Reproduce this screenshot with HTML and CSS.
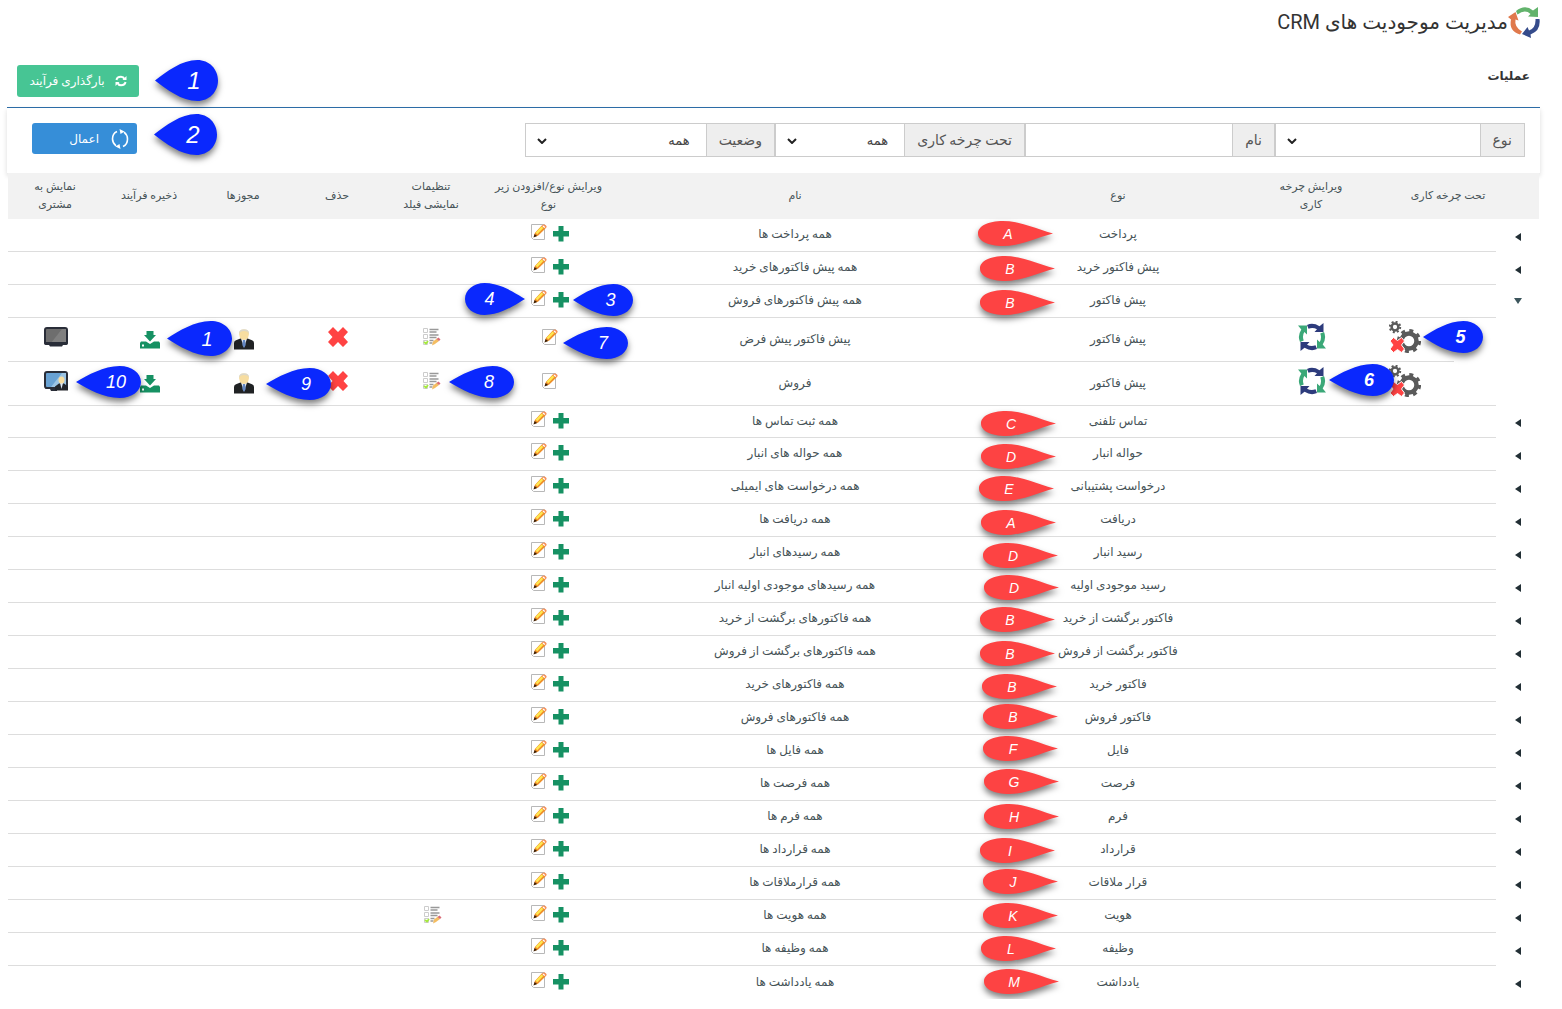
FILE: index.html
```html
<!DOCTYPE html>
<html lang="fa" dir="rtl">
<head>
<meta charset="utf-8">
<title>مدیریت موجودیت های CRM</title>
<link rel="stylesheet" href="styles.css">
</head>
<body>
<svg class="defs" width="0" height="0" aria-hidden="true">
  <symbol id="plus" viewBox="0 0 16 16"><path d="M5.500 0h5v5H16v5.500h-5.500V15.500h-5v-5H0V5h5.500z" fill="#169163"/></symbol>
  <symbol id="edit" viewBox="0 0 16 18">
    <path d="M.5 1.500h13v15h-11l-2-2z" fill="#fff" stroke="#b8b8b8"/>
    <path d="M2.800 14l1-4 7-7.500 3.700 3-7.500 7.300z" fill="#ef8f2a"/><path d="M4.500 9.800l6-6.300 1.800 1.500-6 6.300z" fill="#ffe84f"/>
    <path d="M10.800 2.700l1-1q1.700-.7 3 .6t.6 2.200l-1 1z" fill="#f5905a"/><path d="M12 3l1.800 1.500" stroke="#fff" stroke-width="1.200"/>
    <path d="M3.600 11l2.600 2-3.700 1.500z" fill="#3c2008"/>
  </symbol>
  <symbol id="left" viewBox="0 0 8 10"><path d="M7 1v8L1 5z" fill="#222f35"/></symbol>
  <symbol id="down" viewBox="0 0 8 10"><path d="M0 0h8L4 6z" fill="#3c555c"/></symbol>
  <symbol id="cross" viewBox="0 0 20 20"><path d="M5 0l5 5 5-5 5 5-4.500 5 4.500 5-5 5-5-5-5 5-5-5 4.500-5L0 5z" fill="#ff4343"/></symbol>
  <symbol id="save" viewBox="0 0 20 18"><path d="M6.500 0h7v4H16l-6 6.500L4 4h2.500z" fill="#169163"/><path d="M1 10.500h5l4 2.500 4-2.500h5l1 1.500v5.500H0V12z" fill="#169163"/><path d="M2 13.500h2v2H2z" fill="#fff"/></symbol>
  <symbol id="person" viewBox="0 0 20 21">
    <path d="M0 20.500V14q0-2 2-2.700l5-2h6l5 2q2 .7 2 2.700v6.500z" fill="#202224"/><path d="M7 9.500h6l-3 9z" fill="#e6ecf5"/><path d="M9 11h2l.7 5-1.700 3-1.700-3z" fill="#6488c4"/>
    <path d="M5 5Q5 .5 10 .5T15 5l-1 4q-4 4-8 0z" fill="#f7dda0"/><path d="M5 5Q4.500.3 10 .3T15 5q-1-3-5-3T5 5z" fill="#ddd8c8"/>
  </symbol>
  <symbol id="list" viewBox="0 0 18 18">
    <g fill="#fff" stroke="#ccc"><path d="M.5.500h4v4h-4zM.5 6.500h4v4h-4zM.5 12.500h4v4h-4z"/></g>
    <path d="M6.500 1.500h9M6.500 4h7M6.500 7h9M6.500 9.500h7M6.500 12.500h4M6.500 15h3" stroke="#999" stroke-width="1.300"/>
    <path d="M1 14l2 1.500 2-2.500" fill="none" stroke="#a5ea3c" stroke-width="1.800"/><path d="M9 17.500l1-4 4-3 2 2.500-4 3z" fill="#f4bd62"/><path d="M13.500 11l2-1.500 2 2-1.500 1.500z" fill="#d96b77"/>
  </symbol>
  <symbol id="screen-off" viewBox="0 0 24 20"><rect x="1" y="1" width="22" height="16" rx="2" fill="#6e6e6e" stroke="#292d38" stroke-width="2"/><path d="M7 16L18 2h4v14z" fill="#808080"/><path d="M0 15h24v1q0 2-2 2h-3l-1 1.500H6L5 18H2q-2 0-2-2z" fill="#292d38"/></symbol>
  <symbol id="screen-on" viewBox="0 0 24 20"><rect x="1" y="1" width="22" height="16" rx="2" fill="#69a2d3" stroke="#292d38" stroke-width="2"/><path d="M7 16L18 2h4v14z" fill="#9bc4e4"/><path d="M1 16h12v4H7l-1-2H3q-2 0-2-1z" fill="#292d38"/><path d="M11 19.500v-4l4-3h5l4 3v4z" fill="#22252b"/><path d="M16 12h3l-1.500 6z" fill="#dce8f6"/><ellipse cx="17.500" cy="9" rx="3" ry="3.500" fill="#f7dda0"/></symbol>
  <symbol id="cycle" viewBox="0 0 28 28">
    <g fill="#2d3b7c"><path d="M9 2Q15-.8 21.500 3.300L25.500 0V9H16.500L19 6.300Q15 4 10.500 5.700z"/><path d="M9 2Q15-.8 21.500 3.300L25.500 0V9H16.500L19 6.300Q15 4 10.500 5.700z" transform="rotate(180 14 14)"/></g>
    <g fill="#3ba878"><path d="M9 2Q15-.8 21.500 3.300L25.500 0V9H16.500L19 6.300Q15 4 10.500 5.700z" transform="rotate(90 14 14)"/><path d="M9 2Q15-.8 21.500 3.300L25.500 0V9H16.500L19 6.300Q15 4 10.500 5.700z" transform="rotate(270 14 14)"/></g>
  </symbol>
  <symbol id="gears" viewBox="0 0 32 32">
    <g fill="none" stroke="#5a5a5a"><circle cx="6" cy="6" r="3.400" stroke-width="2.500"/><circle cx="6" cy="6" r="5.200" stroke-width="2" stroke-dasharray="2 2.080"/>
    <circle cx="20" cy="20" r="7.500" stroke-width="4.500"/><circle cx="20" cy="20" r="10.600" stroke-width="3" stroke-dasharray="4 4.320"/></g>
    <path d="M4.500 16.500l4 3 4-3 3 3.500-3 4 3 4-3 3.500-4-3-4 3-3.500-3.500 3-4-3-4z" fill="#ff4343" stroke="#fff" stroke-width="1"/>
  </symbol>
  <symbol id="blue" viewBox="0 0 64 32" preserveAspectRatio="none"><path d="M0 16C12 9 27 0 43 0 55 0 64 7 64 16S55 32 43 32C27 32 12 23 0 16z" fill="#0a28fd"/></symbol>
  <symbol id="red" viewBox="0 0 75 25" preserveAspectRatio="none"><path d="M75 12.500C58 8 42 0 25 0 10 0 0 5 0 12.500S10 25 25 25C42 25 58 17 75 12.500z" fill="#fd4343"/></symbol>
</svg>

<header class="title">
  <svg width="32" height="32" viewBox="0 0 32 32" aria-hidden="true">
    <path d="M8 5Q17-2 25 4.500L30 1V11L20 10.500 22.500 8Q17 3 9.500 8.500z" fill="#62b36c"/>
    <path d="M27.500 13H31.500Q33 25 22.500 28.500L23 32 14 28 19.500 21 21 24.500Q28 22 27.500 13z" fill="#354b8b"/>
    <path d="M14 25.500L12 28.500Q.5 25 3 13.500L0 11 7.500 6 10.500 14.500 7.500 13.500Q6 21 14 25.500z" fill="#e0794c"/>
  </svg>
  <h1>مدیریت موجودیت های CRM</h1>
</header>

<section class="actions">
  <h2>عملیات</h2>
  <button class="btn load" type="button">
    <svg width="12" height="12" viewBox="0 0 12 12" aria-hidden="true" fill="none" stroke="#fff" stroke-width="2"><path d="M1.500 5Q2 1.800 6 1.800 8.500 1.800 9.500 4M10.500 7Q10 10.200 6 10.200 3.500 10.200 2.500 8"/><path d="M11.500 1v4H7.500zM.5 11V7h4z" fill="#fff" stroke="none"/></svg>
    بارگذاری فرآیند
  </button>
</section>

<form class="filters">
  <div class="group"><label for="f-type">نوع</label><select id="f-type"><option></option></select></div>
  <div class="group"><label for="f-name">نام</label><input id="f-name" type="text"></div>
  <div class="group"><label for="f-flow">تحت چرخه کاری</label><select id="f-flow"><option>همه</option></select></div>
  <div class="group"><label for="f-status">وضعیت</label><select id="f-status"><option>همه</option></select></div>
  <button class="btn apply" type="button">
    <svg width="18" height="20" viewBox="0 0 18 20" aria-hidden="true" fill="none" stroke="#fff" stroke-width="1.600"><path d="M6 2.500Q1.500 4.500 1.500 10 1.500 14 5 16.800M12 17.500Q16.500 15.500 16.500 10 16.500 6 13 3.200"/><path d="M8.500 0l5 2.500-4 2.500zM9.500 20l-5-2.500 4-2.500z" fill="#fff" stroke="none"/></svg>
    <span>اعمال</span>
  </button>
</form>

<table class="entities">
  <colgroup><col class="c-toggle"><col class="c-indent"><col class="c-flow"><col class="c-cycle"><col class="c-type"><col class="c-name"><col class="c-edit"><col class="c-s"><col class="c-s"><col class="c-s"><col class="c-s"><col class="c-s"></colgroup>
  <thead><tr><th colspan="3">تحت چرخه کاری</th><th>ویرایش چرخه<br>کاری</th><th>نوع</th><th>نام</th><th>ویرایش نوع/افزودن زیر<br>نوع</th><th>تنظیمات<br>نمایشی فیلد</th><th>حذف</th><th>مجوزها</th><th>ذخیره فرآیند</th><th>نمایش به<br>مشتری</th></tr></thead>
  <tbody>
  <tr><td class="tog"><button aria-label="باز کردن"><svg><use href="#left"/></svg></button></td><td colspan="3"></td><td>پرداخت</td><td>همه پرداخت ها</td><td class="ed"><button aria-label="افزودن"><svg class="i16"><use href="#plus"/></svg></button><button aria-label="ویرایش"><svg class="ie"><use href="#edit"/></svg></button></td><td colspan="5"></td></tr>
  <tr><td class="tog"><button aria-label="باز کردن"><svg><use href="#left"/></svg></button></td><td colspan="3"></td><td>پیش فاکتور خرید</td><td>همه پیش فاکتورهای خرید</td><td class="ed"><button aria-label="افزودن"><svg class="i16"><use href="#plus"/></svg></button><button aria-label="ویرایش"><svg class="ie"><use href="#edit"/></svg></button></td><td colspan="5"></td></tr>
  <tr><td class="tog"><button aria-label="بستن"><svg><use href="#down"/></svg></button></td><td colspan="3"></td><td>پیش فاکتور</td><td>همه پیش فاکتورهای فروش</td><td class="ed"><button aria-label="افزودن"><svg class="i16"><use href="#plus"/></svg></button><button aria-label="ویرایش"><svg class="ie"><use href="#edit"/></svg></button></td><td colspan="5"></td></tr>
  <tr class="child"><td class="bare" colspan="2"></td><td class="ic flow"><button aria-label="تحت چرخه کاری"><svg class="i32"><use href="#gears"/></svg></button></td><td class="ic"><button aria-label="ویرایش چرخه کاری"><svg class="i28"><use href="#cycle"/></svg></button></td><td>پیش فاکتور</td><td>پیش فاکتور پیش فرض</td><td class="ic"><button aria-label="ویرایش"><svg class="ie"><use href="#edit"/></svg></button></td><td class="ic"><button aria-label="تنظیمات"><svg class="i18"><use href="#list"/></svg></button></td><td class="ic"><button aria-label="حذف"><svg class="i20"><use href="#cross"/></svg></button></td><td class="ic low"><button aria-label="مجوزها"><svg class="ip"><use href="#person"/></svg></button></td><td class="ic low"><button aria-label="ذخیره فرآیند"><svg class="isv"><use href="#save"/></svg></button></td><td class="ic"><button aria-label="نمایش به مشتری"><svg class="im"><use href="#screen-off"/></svg></button></td></tr>
  <tr class="child"><td class="bare"></td><td></td><td class="ic flow"><button aria-label="تحت چرخه کاری"><svg class="i32"><use href="#gears"/></svg></button></td><td class="ic"><button aria-label="ویرایش چرخه کاری"><svg class="i28"><use href="#cycle"/></svg></button></td><td>پیش فاکتور</td><td>فروش</td><td class="ic"><button aria-label="ویرایش"><svg class="ie"><use href="#edit"/></svg></button></td><td class="ic"><button aria-label="تنظیمات"><svg class="i18"><use href="#list"/></svg></button></td><td class="ic"><button aria-label="حذف"><svg class="i20"><use href="#cross"/></svg></button></td><td class="ic low"><button aria-label="مجوزها"><svg class="ip"><use href="#person"/></svg></button></td><td class="ic low"><button aria-label="ذخیره فرآیند"><svg class="isv"><use href="#save"/></svg></button></td><td class="ic"><button aria-label="نمایش به مشتری"><svg class="im"><use href="#screen-on"/></svg></button></td></tr>
  <tr class="next"><td class="tog"><button aria-label="باز کردن"><svg><use href="#left"/></svg></button></td><td colspan="3"></td><td>تماس تلفنی</td><td>همه ثبت تماس ها</td><td class="ed"><button aria-label="افزودن"><svg class="i16"><use href="#plus"/></svg></button><button aria-label="ویرایش"><svg class="ie"><use href="#edit"/></svg></button></td><td colspan="5"></td></tr>
  <tr><td class="tog"><button aria-label="باز کردن"><svg><use href="#left"/></svg></button></td><td colspan="3"></td><td>حواله انبار</td><td>همه حواله های انبار</td><td class="ed"><button aria-label="افزودن"><svg class="i16"><use href="#plus"/></svg></button><button aria-label="ویرایش"><svg class="ie"><use href="#edit"/></svg></button></td><td colspan="5"></td></tr>
  <tr><td class="tog"><button aria-label="باز کردن"><svg><use href="#left"/></svg></button></td><td colspan="3"></td><td>درخواست پشتیبانی</td><td>همه درخواست های ایمیلی</td><td class="ed"><button aria-label="افزودن"><svg class="i16"><use href="#plus"/></svg></button><button aria-label="ویرایش"><svg class="ie"><use href="#edit"/></svg></button></td><td colspan="5"></td></tr>
  <tr><td class="tog"><button aria-label="باز کردن"><svg><use href="#left"/></svg></button></td><td colspan="3"></td><td>دریافت</td><td>همه دریافت ها</td><td class="ed"><button aria-label="افزودن"><svg class="i16"><use href="#plus"/></svg></button><button aria-label="ویرایش"><svg class="ie"><use href="#edit"/></svg></button></td><td colspan="5"></td></tr>
  <tr><td class="tog"><button aria-label="باز کردن"><svg><use href="#left"/></svg></button></td><td colspan="3"></td><td>رسید انبار</td><td>همه رسیدهای انبار</td><td class="ed"><button aria-label="افزودن"><svg class="i16"><use href="#plus"/></svg></button><button aria-label="ویرایش"><svg class="ie"><use href="#edit"/></svg></button></td><td colspan="5"></td></tr>
  <tr><td class="tog"><button aria-label="باز کردن"><svg><use href="#left"/></svg></button></td><td colspan="3"></td><td>رسید موجودی اولیه</td><td>همه رسیدهای موجودی اولیه انبار</td><td class="ed"><button aria-label="افزودن"><svg class="i16"><use href="#plus"/></svg></button><button aria-label="ویرایش"><svg class="ie"><use href="#edit"/></svg></button></td><td colspan="5"></td></tr>
  <tr><td class="tog"><button aria-label="باز کردن"><svg><use href="#left"/></svg></button></td><td colspan="3"></td><td>فاکتور برگشت از خرید</td><td>همه فاکتورهای برگشت از خرید</td><td class="ed"><button aria-label="افزودن"><svg class="i16"><use href="#plus"/></svg></button><button aria-label="ویرایش"><svg class="ie"><use href="#edit"/></svg></button></td><td colspan="5"></td></tr>
  <tr><td class="tog"><button aria-label="باز کردن"><svg><use href="#left"/></svg></button></td><td colspan="3"></td><td>فاکتور برگشت از فروش</td><td>همه فاکتورهای برگشت از فروش</td><td class="ed"><button aria-label="افزودن"><svg class="i16"><use href="#plus"/></svg></button><button aria-label="ویرایش"><svg class="ie"><use href="#edit"/></svg></button></td><td colspan="5"></td></tr>
  <tr><td class="tog"><button aria-label="باز کردن"><svg><use href="#left"/></svg></button></td><td colspan="3"></td><td>فاکتور خرید</td><td>همه فاکتورهای خرید</td><td class="ed"><button aria-label="افزودن"><svg class="i16"><use href="#plus"/></svg></button><button aria-label="ویرایش"><svg class="ie"><use href="#edit"/></svg></button></td><td colspan="5"></td></tr>
  <tr><td class="tog"><button aria-label="باز کردن"><svg><use href="#left"/></svg></button></td><td colspan="3"></td><td>فاکتور فروش</td><td>همه فاکتورهای فروش</td><td class="ed"><button aria-label="افزودن"><svg class="i16"><use href="#plus"/></svg></button><button aria-label="ویرایش"><svg class="ie"><use href="#edit"/></svg></button></td><td colspan="5"></td></tr>
  <tr><td class="tog"><button aria-label="باز کردن"><svg><use href="#left"/></svg></button></td><td colspan="3"></td><td>فایل</td><td>همه فایل ها</td><td class="ed"><button aria-label="افزودن"><svg class="i16"><use href="#plus"/></svg></button><button aria-label="ویرایش"><svg class="ie"><use href="#edit"/></svg></button></td><td colspan="5"></td></tr>
  <tr><td class="tog"><button aria-label="باز کردن"><svg><use href="#left"/></svg></button></td><td colspan="3"></td><td>فرصت</td><td>همه فرصت ها</td><td class="ed"><button aria-label="افزودن"><svg class="i16"><use href="#plus"/></svg></button><button aria-label="ویرایش"><svg class="ie"><use href="#edit"/></svg></button></td><td colspan="5"></td></tr>
  <tr><td class="tog"><button aria-label="باز کردن"><svg><use href="#left"/></svg></button></td><td colspan="3"></td><td>فرم</td><td>همه فرم ها</td><td class="ed"><button aria-label="افزودن"><svg class="i16"><use href="#plus"/></svg></button><button aria-label="ویرایش"><svg class="ie"><use href="#edit"/></svg></button></td><td colspan="5"></td></tr>
  <tr><td class="tog"><button aria-label="باز کردن"><svg><use href="#left"/></svg></button></td><td colspan="3"></td><td>قرارداد</td><td>همه قرارداد ها</td><td class="ed"><button aria-label="افزودن"><svg class="i16"><use href="#plus"/></svg></button><button aria-label="ویرایش"><svg class="ie"><use href="#edit"/></svg></button></td><td colspan="5"></td></tr>
  <tr><td class="tog"><button aria-label="باز کردن"><svg><use href="#left"/></svg></button></td><td colspan="3"></td><td>قرار ملاقات</td><td>همه قرارملاقات ها</td><td class="ed"><button aria-label="افزودن"><svg class="i16"><use href="#plus"/></svg></button><button aria-label="ویرایش"><svg class="ie"><use href="#edit"/></svg></button></td><td colspan="5"></td></tr>
  <tr><td class="tog"><button aria-label="باز کردن"><svg><use href="#left"/></svg></button></td><td colspan="3"></td><td>هویت</td><td>همه هویت ها</td><td class="ed"><button aria-label="افزودن"><svg class="i16"><use href="#plus"/></svg></button><button aria-label="ویرایش"><svg class="ie"><use href="#edit"/></svg></button></td><td class="ic"><button aria-label="تنظیمات"><svg class="i18"><use href="#list"/></svg></button></td><td colspan="4"></td></tr>
  <tr><td class="tog"><button aria-label="باز کردن"><svg><use href="#left"/></svg></button></td><td colspan="3"></td><td>وظیفه</td><td>همه وظیفه ها</td><td class="ed"><button aria-label="افزودن"><svg class="i16"><use href="#plus"/></svg></button><button aria-label="ویرایش"><svg class="ie"><use href="#edit"/></svg></button></td><td colspan="5"></td></tr>
  <tr class="last"><td class="tog"><button aria-label="باز کردن"><svg><use href="#left"/></svg></button></td><td colspan="3"></td><td>یادداشت</td><td>همه یادداشت ها</td><td class="ed"><button aria-label="افزودن"><svg class="i16"><use href="#plus"/></svg></button><button aria-label="ویرایش"><svg class="ie"><use href="#edit"/></svg></button></td><td colspan="5"></td></tr>
  </tbody>
</table>

<div class="callouts">
  <div class="pin blue big" style="left:155px;top:60px"><svg><use href="#blue"/></svg><i>1</i></div>
  <div class="pin blue big" style="left:154px;top:114px"><svg><use href="#blue"/></svg><i>2</i></div>
  <div class="pin blue short" style="left:573px;top:284px"><svg><use href="#blue"/></svg><i>3</i></div>
  <div class="pin blue short flip" style="left:465px;top:283px"><svg><use href="#blue"/></svg><i>4</i></div>
  <div class="pin blue short bold" style="left:1423px;top:321px"><svg><use href="#blue"/></svg><i>5</i></div>
  <div class="pin blue bold" style="left:1329px;top:364px"><svg><use href="#blue"/></svg><i>6</i></div>
  <div class="pin blue" style="left:563px;top:327px"><svg><use href="#blue"/></svg><i>7</i></div>
  <div class="pin blue" style="left:449px;top:366px"><svg><use href="#blue"/></svg><i>8</i></div>
  <div class="pin blue" style="left:266px;top:368px"><svg><use href="#blue"/></svg><i>9</i></div>
  <div class="pin blue" style="left:76px;top:366px"><svg><use href="#blue"/></svg><i>10</i></div>
  <div class="pin blue tall" style="left:167px;top:321px"><svg><use href="#blue"/></svg><i>1</i></div>
  <div class="pin red" style="left:978px;top:221px"><svg><use href="#red"/></svg><i>A</i></div>
  <div class="pin red" style="left:980px;top:256px"><svg><use href="#red"/></svg><i>B</i></div>
  <div class="pin red" style="left:980px;top:290px"><svg><use href="#red"/></svg><i>B</i></div>
  <div class="pin red" style="left:981px;top:411px"><svg><use href="#red"/></svg><i>C</i></div>
  <div class="pin red" style="left:981px;top:444px"><svg><use href="#red"/></svg><i>D</i></div>
  <div class="pin red" style="left:979px;top:476px"><svg><use href="#red"/></svg><i>E</i></div>
  <div class="pin red" style="left:981px;top:510px"><svg><use href="#red"/></svg><i>A</i></div>
  <div class="pin red" style="left:983px;top:543px"><svg><use href="#red"/></svg><i>D</i></div>
  <div class="pin red" style="left:984px;top:575px"><svg><use href="#red"/></svg><i>D</i></div>
  <div class="pin red" style="left:980px;top:607px"><svg><use href="#red"/></svg><i>B</i></div>
  <div class="pin red" style="left:980px;top:641px"><svg><use href="#red"/></svg><i>B</i></div>
  <div class="pin red" style="left:982px;top:674px"><svg><use href="#red"/></svg><i>B</i></div>
  <div class="pin red" style="left:983px;top:704px"><svg><use href="#red"/></svg><i>B</i></div>
  <div class="pin red" style="left:983px;top:736px"><svg><use href="#red"/></svg><i>F</i></div>
  <div class="pin red" style="left:984px;top:769px"><svg><use href="#red"/></svg><i>G</i></div>
  <div class="pin red" style="left:984px;top:804px"><svg><use href="#red"/></svg><i>H</i></div>
  <div class="pin red" style="left:980px;top:838px"><svg><use href="#red"/></svg><i>I</i></div>
  <div class="pin red" style="left:983px;top:869px"><svg><use href="#red"/></svg><i>J</i></div>
  <div class="pin red" style="left:983px;top:903px"><svg><use href="#red"/></svg><i>K</i></div>
  <div class="pin red" style="left:981px;top:936px"><svg><use href="#red"/></svg><i>L</i></div>
  <div class="pin red" style="left:984px;top:969px"><svg><use href="#red"/></svg><i>M</i></div>
</div>
</body>
</html>
```
FILE: styles.css
```css
* { box-sizing: border-box; }
body { margin: 0; background: #fff; color: #465357; font: 12px/18px Roboto, "DejaVu Sans", sans-serif; position: relative; overflow-x: hidden; }
.defs { position: absolute; }
button { font: inherit; }

.title { display: flex; align-items: center; height: 44px; padding: 0 22px 0 0; }
.title h1 { margin: 0; font-size: 20px; line-height: 32px; font-weight: 400; color: #333; }

.actions { display: flex; justify-content: space-between; align-items: center; height: 63px; margin: 0 22px 0 7px; padding: 11px 10px 0; }
.actions h2 { margin: 0; padding-bottom: 10px; font-size: 12px; font-weight: 700; color: #333; }

.btn { display: flex; align-items: center; border: 0; border-radius: 3px; color: #fff; font-size: 12px; font-weight: 500; }
.load { height: 32px; width: 122px; justify-content: center; gap: 10px; padding: 0; white-space: nowrap; background: #47c594; }
.apply { width: 105px; height: 31px; padding: 0 8px; gap: 12px; margin-right: auto; background: #368ed8; }

.filters { display: flex; height: 66px; margin: 0 22px 0 7px; padding: 15px 15px 0 25px; border-top: 1px solid #2c6ca6; box-shadow: 0 3px 5px rgba(0, 0, 0, .14); }
.group { display: flex; width: 250px; height: 34px; }
.group label { flex: none; padding: 0 12px; border: 1px solid #ccc; background: #eee; color: #555; font-size: 14px; line-height: 32px; text-align: center; }
.group select, .group input { flex: 1; min-width: 0; height: 34px; padding: 0 16px; border: 1px solid #ccc; border-radius: 0; border-right: 0; background: #fff; color: #444; font: 13px Roboto, "DejaVu Sans", sans-serif; }
.group select { appearance: none; background: #fff url("data:image/svg+xml,%3Csvg xmlns='http://www.w3.org/2000/svg' width='10' height='6'%3E%3Cpath d='M1 1l4 4 4-4' fill='none' stroke='%23222' stroke-width='2'/%3E%3C/svg%3E") no-repeat 11px 14px; }

.entities { position: relative; width: calc(100% - 31px); margin: 0 23px 0 8px; border-collapse: separate; border-spacing: 0; table-layout: fixed; background: #fff; }
.c-toggle { width: 43px; }
.c-indent { width: 42px; }
.c-flow { width: 97px; }
.c-cycle { width: 92px; }
.c-type { width: 294px; }
.c-edit { width: 141px; }
.c-s { width: 94px; }
th { height: 46px; padding: 0; background: #f2f2f2; font-size: 11px; font-weight: 400; white-space: nowrap; }
td { height: 33px; padding: 0 0 2px; border-bottom: 1px solid #ddd; text-align: center; }
.next td { height: 32px; }
.child td { height: 44px; padding: 0 0 2px; }
.child .ic { padding: 0 0 6px 2px; }
.child .low { padding-bottom: 0; }
.child .flow { padding-left: 0; }
td.tog, td.bare, .last td { border-bottom: 0; }
td button { padding: 0; border: 0; background: none; display: inline-block; vertical-align: middle; line-height: 0; }
.tog { padding: 2px 0 0; line-height: 0; }
.tog svg { width: 8px; height: 10px; }
.ed, .ic { padding-left: 3px; line-height: 0; }
.ed button + button { margin-right: 6px; padding-bottom: 4px; }
.i16 { width: 16px; height: 16px; }
.ie { width: 16px; height: 18px; }
.i18 { width: 18px; height: 18px; }
.i20 { width: 20px; height: 20px; }
.i28 { width: 28px; height: 28px; }
.i32 { width: 32px; height: 32px; }
.ip { width: 20px; height: 21px; }
.isv { width: 20px; height: 18px; }
.im { width: 24px; height: 20px; }

.callouts { position: absolute; top: 0; left: 0; direction: ltr; }
.pin { position: absolute; display: flex; align-items: center; justify-content: center; color: #fff; }
.pin svg { position: absolute; inset: 0; width: 100%; height: 100%; overflow: visible; filter: drop-shadow(0 4px 3px rgba(0, 0, 0, .5)); }
.pin i { position: relative; font-family: "Liberation Sans", sans-serif; }
.blue { width: 65px; height: 32px; padding-left: 15px; font-size: 18px; }
.short { width: 60px; }
.bold { font-weight: 700; }
.tall { height: 35px; font-size: 20px; }
.big { width: 63px; height: 41px; font-size: 24px; }
.flip { padding: 0 11px 0 0; }
.flip svg { transform: scaleX(-1); }
.red { width: 75px; height: 25px; padding-right: 15px; font-size: 14px; }
```
